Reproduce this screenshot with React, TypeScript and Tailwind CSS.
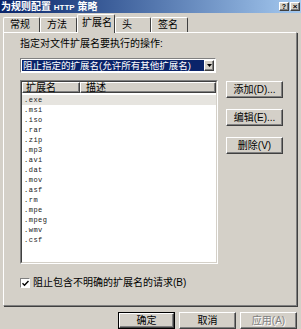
import React from 'react';

const font = { fontFamily: '"Liberation Sans", "Noto Sans CJK SC", sans-serif' };

const raised =
  'border border-t-white border-l-white border-r-[#404040] border-b-[#404040] shadow-[inset_-1px_-1px_0_#808080] bg-[#d4d0c8]';

const extensions = ['.exe', '.msi', '.iso', '.rar', '.zip', '.mp3', '.avi', '.dat', '.mov', '.asf', '.rm', '.mpe', '.mpeg', '.wmv', '.csf'];

const tabs = [
  { label: '常规', w: 'w-[37px]' },
  { label: '方法', w: 'w-[37px]' },
  { label: '扩展名', w: 'w-[38px]', active: true },
  { label: '头', w: 'w-[36px]' },
  { label: '签名', w: 'w-[37px]' },
];

function Button({ children, className = '', disabled = false }: { children: React.ReactNode; className?: string; disabled?: boolean }) {
  return (
    <div
      className={`${raised} flex items-center justify-center text-[10px] leading-none ${
        disabled ? 'text-[#808080] [text-shadow:1px_1px_0_#ffffff]' : 'text-black'
      } ${className}`}
    >
      {children}
    </div>
  );
}

export default function App() {
  return (
    <div className="w-[301px] h-[329px] overflow-hidden bg-[#d4d0c8] flex flex-col" style={font}>
      {/* Title bar */}
      <div className="h-[13px] flex items-center justify-between bg-gradient-to-r from-[#0a246a] to-[#a6caf0] pl-[1px] pr-[1px]">
        <span className="text-[10px] font-bold leading-none text-white">
          为规则配置 <span className="text-[8px]">HTTP</span> 策略
        </span>
        <div className="flex gap-[1px]">
          <div className={`${raised} w-[10px] h-[9px] flex items-center justify-center text-[7px] font-bold leading-none`}>?</div>
          <div className={`${raised} w-[10px] h-[9px] flex items-center justify-center text-[8px] font-bold leading-none`}>×</div>
        </div>
      </div>

      {/* Tabs */}
      <div className="mt-[1px] h-[18px] flex items-end pl-[3px]">
        {tabs.map((t) =>
          t.active ? (
            <div
              key={t.label}
              className={`${t.w} h-[19px] -mb-px relative z-10 bg-[#d4d0c8] border-t border-l border-r border-t-white border-l-white border-r-[#404040] rounded-t-[2px] pl-[4px] pt-[2px] text-[10px] leading-[12px] whitespace-nowrap`}
            >
              {t.label}
            </div>
          ) : (
            <div
              key={t.label}
              className={`${t.w} h-[15px] border-t border-l border-r border-t-white border-l-white border-r-[#404040] rounded-t-[2px] pl-[6px] pt-[1px] text-[10px] leading-[12px]`}
            >
              {t.label}
            </div>
          )
        )}
      </div>

      {/* Panel */}
      <div className="ml-[3px] mr-[4px] h-[274px] border border-t-white border-l-white border-r-[#808080] border-b-[#808080] shadow-[1px_1px_0_#404040] pl-[16px] pt-[5px] flex flex-col">
        <div className="text-[10px] leading-[12px]">指定对文件扩展名要执行的操作:</div>

        {/* Dropdown */}
        <div className="mt-[8px] w-[196px] h-[15px] border border-t-[#808080] border-l-[#808080] border-r-white border-b-white bg-white flex items-center p-[1px]">
          <div className="flex-1 h-full bg-[#0a246a] text-white text-[9.5px] leading-[11px] pl-[1px] whitespace-nowrap overflow-hidden">
            阻止指定的扩展名(允许所有其他扩展名)
          </div>
          <div className={`${raised} w-[10px] h-full flex items-center justify-center`}>
            <svg width="5" height="3" viewBox="0 0 5 3">
              <path d="M0 0H5L2.5 3Z" fill="#000" />
            </svg>
          </div>
        </div>

        <div className="mt-[7px] flex">
          {/* List view */}
          <div className="w-[198px] h-[184px] border border-t-[#808080] border-l-[#808080] border-r-white border-b-white">
            <div className="h-full border border-t-[#404040] border-l-[#404040] border-r-[#d4d0c8] border-b-[#d4d0c8] bg-white flex flex-col">
              <div className="h-[11px] flex">
                <div className={`${raised} w-[58px] h-full text-[10px] leading-[9px] pl-[3px]`}>扩展名</div>
                <div className={`${raised} flex-1 h-full text-[10px] leading-[9px] pl-[5px]`}>描述</div>
              </div>
              <div className="pt-[2px] flex flex-col">
                {extensions.map((e, i) => (
                  <div
                    key={e}
                    className={`h-[10px] pl-[2px] text-[7px] leading-[10px] tracking-[0.5px] text-[#202020] ${i === 0 ? 'bg-[#e6e4df]' : ''}`}
                    style={{ fontFamily: '"Liberation Mono", monospace' }}
                  >
                    {e}
                  </div>
                ))}
              </div>
            </div>
          </div>

          {/* Side buttons */}
          <div className="ml-[8px] pt-[1px] flex flex-col gap-[11px]">
            <Button className="w-[57px] h-[17px]">添加(D)...</Button>
            <Button className="w-[57px] h-[17px]">编辑(E)...</Button>
            <Button className="w-[57px] h-[17px]">删除(V)</Button>
          </div>
        </div>

        {/* Checkbox */}
        <div className="mt-[13px] flex items-center gap-[3px]">
          <div className="w-[10px] h-[10px] bg-white border border-t-[#808080] border-l-[#808080] border-r-white border-b-white flex items-center justify-center">
            <svg width="7" height="7" viewBox="0 0 7 7">
              <path d="M0.5 3.2L2.5 5.2L6.5 1" stroke="#000" strokeWidth="1.4" fill="none" />
            </svg>
          </div>
          <span className="text-[10px] leading-[12px]">阻止包含不明确的扩展名的请求(B)</span>
        </div>
      </div>

      {/* Bottom buttons */}
      <div className="mt-[6px] flex justify-end gap-[4px] pr-[4px]">
        <div className="w-[57px] h-[17px] border border-black flex">
          <Button className="flex-1 h-full">确定</Button>
        </div>
        <Button className="w-[57px] h-[17px]">取消</Button>
        <Button className="w-[57px] h-[17px]" disabled>
          应用(A)
        </Button>
      </div>
    </div>
  );
}
